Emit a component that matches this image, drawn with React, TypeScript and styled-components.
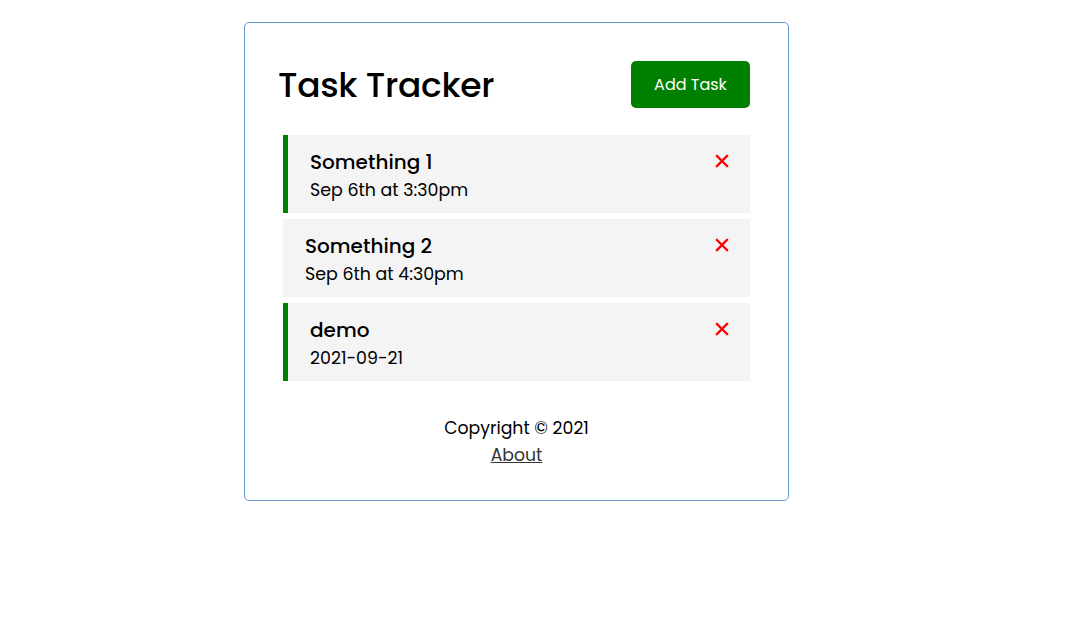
import * as React from 'react';
import styled, {createGlobalStyle} from 'styled-components';

const GlobalStyle = createGlobalStyle`
	* {
		box-sizing: border-box;
	}
	body {
		margin: 0;
		font-family: 'Poppins', 'Open Sans', sans-serif;
		color: #000;
		background: #fff;
	}
`;

interface ITask {
	id: number;
	text: string;
	day: string;
	reminder: boolean;
}

const tasks: ITask[] = [
	{id: 1, text: 'Something 1', day: 'Sep 6th at 3:30pm', reminder: true},
	{id: 2, text: 'Something 2', day: 'Sep 6th at 4:30pm', reminder: false},
	{id: 3, text: 'demo', day: '2021-09-21', reminder: true},
];

const DeleteIcon: React.FC = () => (
	<DeleteSvg viewBox="0 0 14 14" width="14" height="14">
		<path d="M2 2 L12 12 M12 2 L2 12" stroke="red" strokeWidth="2.3" strokeLinecap="square" fill="none" />
	</DeleteSvg>
);

const Task: React.FC<{task: ITask}> = ({task}) => (
	<TaskElement $reminder={task.reminder}>
		<TaskTitle>
			{task.text}
			<DeleteIcon />
		</TaskTitle>
		<TaskDay>{task.day}</TaskDay>
	</TaskElement>
);

export default function App() {
	return (
		<>
			<GlobalStyle />
			<Container>
				<Header>
					<Title>Task Tracker</Title>
					<Button>Add Task</Button>
				</Header>
				{tasks.map((task) => <Task key={task.id} task={task} />)}
				<Footer>
					<p>Copyright &copy; 2021</p>
					<a href="#about">About</a>
				</Footer>
			</Container>
		</>
	);
}

const Container = styled.div`
	width: 545px;
	margin: 22px 0 0 244px;
	padding: 33px 33px 32px;
	border: 1px solid #6a9bd0;
	border-radius: 5px;
`;

const Header = styled.header`
	display: flex;
	justify-content: space-between;
	align-items: center;
	margin-bottom: 22px;
`;

const Title = styled.h1`
	margin: 1px 0 0;
	font-size: 34.5px;
	font-weight: 500;
	letter-spacing: -0.3px;
`;

const Button = styled.button`
	background: green;
	color: #fff;
	border: none;
	width: 119px;
	height: 47px;
	margin: 5px;
	border-radius: 5px;
	font-family: inherit;
	font-size: 16px;
	cursor: pointer;
`;

const TaskElement = styled.div<{$reminder: boolean}>`
	background: #f4f4f4;
	margin: 5px 5px 6px;
	padding: 14px 22px 9px;
	height: 78px;
	border-left: ${({$reminder}) => ($reminder ? '5px solid green' : 'none')};
	cursor: pointer;
`;

const TaskTitle = styled.h3`
	display: flex;
	justify-content: space-between;
	align-items: center;
	margin: 0;
	font-size: 20px;
	font-weight: 500;
	line-height: 27px;
`;

const DeleteSvg = styled.svg`
	display: block;
	margin-right: -1px;
	margin-top: -3px;
`;

const TaskDay = styled.p`
	margin: 0;
	font-size: 17.4px;
	line-height: 28px;
`;

const Footer = styled.footer`
	margin-top: 34px;
	text-align: center;
	font-size: 17.3px;
	line-height: 26px;

	p {
		margin: 0;
		line-height: 27px;
	}
	a {
		color: #333;
	}
`;
